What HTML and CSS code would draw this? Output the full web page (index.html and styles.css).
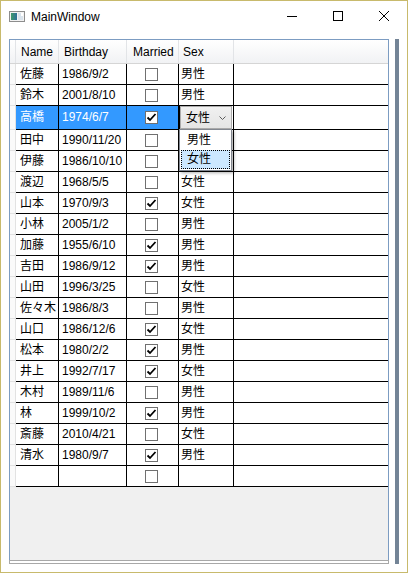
FILE: index.html
```html
<!DOCTYPE html>
<html>

<head>
    <meta charset="utf-8">
    <title>MainWindow</title>
    <link rel="stylesheet" href="styles.css">
</head>

<body>
    <div class="window">
        <div class="titleBar">
            <svg class="appIcon" width="16" height="11" viewBox="0 0 16 11">
                <defs>
                    <linearGradient id="iconFill" x1="0" y1="0" x2="1" y2="0">
                        <stop offset="0" stop-color="#3f9a6a" />
                        <stop offset="1" stop-color="#2f6f9a" />
                    </linearGradient>
                </defs>
                <rect x="0.5" y="0.5" width="15" height="10" fill="#f2f2f2" stroke="#8d8d8d" />
                <rect x="2" y="2" width="6" height="7" fill="url(#iconFill)" />
                <rect x="9" y="2" width="5" height="7" fill="#d9e3ec" />
                <rect x="12" y="2" width="2" height="3" fill="#ffffff" />
            </svg>
            <span class="title">MainWindow</span>
            <div class="captionButtons">
                <div class="capBtn">
                    <svg width="10" height="10" viewBox="0 0 10 10">
                        <line x1="0" y1="5.5" x2="10" y2="5.5" stroke="#000" stroke-width="1" />
                    </svg>
                </div>
                <div class="capBtn">
                    <svg width="10" height="10" viewBox="0 0 10 10">
                        <rect x="0.5" y="0.5" width="9" height="9" fill="none" stroke="#000" stroke-width="1" />
                    </svg>
                </div>
                <div class="capBtn">
                    <svg width="10" height="10" viewBox="0 0 10 10">
                        <path d="M0 0 L10 10 M10 0 L0 10" stroke="#000" stroke-width="1" />
                    </svg>
                </div>
            </div>
        </div>

        <div class="client">
            <div class="gridWrap">
                <div class="dataGrid">
                    <div class="gridHeader">
                        <div class="hcell rowHeadCol"></div>
                        <div class="hcell">Name</div>
                        <div class="hcell">Birthday</div>
                        <div class="hcell married">Married</div>
                        <div class="hcell sexHead">Sex</div>
                        <div class="hcell fill"></div>
                    </div>

                    <div class="gridBody">
                        <div class="row">
                            <div class="rowHead"></div>
                            <div class="cell name">佐藤</div>
                            <div class="cell birthday">1986/9/2</div>
                            <div class="cell married"><span class="check"></span></div>
                            <div class="cell sex">男性</div>
                            <div class="cell fill"></div>
                        </div>
                        <div class="row">
                            <div class="rowHead"></div>
                            <div class="cell name">鈴木</div>
                            <div class="cell birthday">2001/8/10</div>
                            <div class="cell married"><span class="check"></span></div>
                            <div class="cell sex">男性</div>
                            <div class="cell fill"></div>
                        </div>
                        <div class="row selected">
                            <div class="rowHead"></div>
                            <div class="cell name">高橋</div>
                            <div class="cell birthday">1974/6/7</div>
                            <div class="cell married"><span class="check"><svg width="11" height="11" viewBox="0 0 11 11"><path d="M1.5 5.5 L4 8 L9.5 2" fill="none" stroke="#000" stroke-width="1.8" /></svg></span></div>
                            <div class="cell sex editing">
                                <div class="combo">
                                    <span>女性</span>
                                    <svg class="chevron" width="7" height="4" viewBox="0 0 7 4">
                                        <polyline points="0.5,0.5 3.5,3.5 6.5,0.5" fill="none" stroke="#5c5c5c" stroke-width="1" />
                                    </svg>
                                </div>
                            </div>
                            <div class="cell fill"></div>
                        </div>
                        <!-- sex of the next two rows sits under the open list -->
                        <div class="row">
                            <div class="rowHead"></div>
                            <div class="cell name">田中</div>
                            <div class="cell birthday">1990/11/20</div>
                            <div class="cell married"><span class="check"></span></div>
                            <div class="cell sex"></div>
                            <div class="cell fill"></div>
                        </div>
                        <div class="row">
                            <div class="rowHead"></div>
                            <div class="cell name">伊藤</div>
                            <div class="cell birthday">1986/10/10</div>
                            <div class="cell married"><span class="check"></span></div>
                            <div class="cell sex"></div>
                            <div class="cell fill"></div>
                        </div>
                        <div class="row">
                            <div class="rowHead"></div>
                            <div class="cell name">渡辺</div>
                            <div class="cell birthday">1968/5/5</div>
                            <div class="cell married"><span class="check"></span></div>
                            <div class="cell sex">女性</div>
                            <div class="cell fill"></div>
                        </div>
                        <div class="row">
                            <div class="rowHead"></div>
                            <div class="cell name">山本</div>
                            <div class="cell birthday">1970/9/3</div>
                            <div class="cell married"><span class="check"><svg width="11" height="11" viewBox="0 0 11 11"><path d="M1.5 5.5 L4 8 L9.5 2" fill="none" stroke="#000" stroke-width="1.8" /></svg></span></div>
                            <div class="cell sex">女性</div>
                            <div class="cell fill"></div>
                        </div>
                        <div class="row">
                            <div class="rowHead"></div>
                            <div class="cell name">小林</div>
                            <div class="cell birthday">2005/1/2</div>
                            <div class="cell married"><span class="check"></span></div>
                            <div class="cell sex">男性</div>
                            <div class="cell fill"></div>
                        </div>
                        <div class="row">
                            <div class="rowHead"></div>
                            <div class="cell name">加藤</div>
                            <div class="cell birthday">1955/6/10</div>
                            <div class="cell married"><span class="check"><svg width="11" height="11" viewBox="0 0 11 11"><path d="M1.5 5.5 L4 8 L9.5 2" fill="none" stroke="#000" stroke-width="1.8" /></svg></span></div>
                            <div class="cell sex">男性</div>
                            <div class="cell fill"></div>
                        </div>
                        <div class="row">
                            <div class="rowHead"></div>
                            <div class="cell name">吉田</div>
                            <div class="cell birthday">1986/9/12</div>
                            <div class="cell married"><span class="check"><svg width="11" height="11" viewBox="0 0 11 11"><path d="M1.5 5.5 L4 8 L9.5 2" fill="none" stroke="#000" stroke-width="1.8" /></svg></span></div>
                            <div class="cell sex">男性</div>
                            <div class="cell fill"></div>
                        </div>
                        <div class="row">
                            <div class="rowHead"></div>
                            <div class="cell name">山田</div>
                            <div class="cell birthday">1996/3/25</div>
                            <div class="cell married"><span class="check"></span></div>
                            <div class="cell sex">女性</div>
                            <div class="cell fill"></div>
                        </div>
                        <div class="row">
                            <div class="rowHead"></div>
                            <div class="cell name">佐々木</div>
                            <div class="cell birthday">1986/8/3</div>
                            <div class="cell married"><span class="check"></span></div>
                            <div class="cell sex">男性</div>
                            <div class="cell fill"></div>
                        </div>
                        <div class="row">
                            <div class="rowHead"></div>
                            <div class="cell name">山口</div>
                            <div class="cell birthday">1986/12/6</div>
                            <div class="cell married"><span class="check"><svg width="11" height="11" viewBox="0 0 11 11"><path d="M1.5 5.5 L4 8 L9.5 2" fill="none" stroke="#000" stroke-width="1.8" /></svg></span></div>
                            <div class="cell sex">女性</div>
                            <div class="cell fill"></div>
                        </div>
                        <div class="row">
                            <div class="rowHead"></div>
                            <div class="cell name">松本</div>
                            <div class="cell birthday">1980/2/2</div>
                            <div class="cell married"><span class="check"><svg width="11" height="11" viewBox="0 0 11 11"><path d="M1.5 5.5 L4 8 L9.5 2" fill="none" stroke="#000" stroke-width="1.8" /></svg></span></div>
                            <div class="cell sex">男性</div>
                            <div class="cell fill"></div>
                        </div>
                        <div class="row">
                            <div class="rowHead"></div>
                            <div class="cell name">井上</div>
                            <div class="cell birthday">1992/7/17</div>
                            <div class="cell married"><span class="check"><svg width="11" height="11" viewBox="0 0 11 11"><path d="M1.5 5.5 L4 8 L9.5 2" fill="none" stroke="#000" stroke-width="1.8" /></svg></span></div>
                            <div class="cell sex">女性</div>
                            <div class="cell fill"></div>
                        </div>
                        <div class="row">
                            <div class="rowHead"></div>
                            <div class="cell name">木村</div>
                            <div class="cell birthday">1989/11/6</div>
                            <div class="cell married"><span class="check"></span></div>
                            <div class="cell sex">男性</div>
                            <div class="cell fill"></div>
                        </div>
                        <div class="row">
                            <div class="rowHead"></div>
                            <div class="cell name">林</div>
                            <div class="cell birthday">1999/10/2</div>
                            <div class="cell married"><span class="check"><svg width="11" height="11" viewBox="0 0 11 11"><path d="M1.5 5.5 L4 8 L9.5 2" fill="none" stroke="#000" stroke-width="1.8" /></svg></span></div>
                            <div class="cell sex">男性</div>
                            <div class="cell fill"></div>
                        </div>
                        <div class="row">
                            <div class="rowHead"></div>
                            <div class="cell name">斎藤</div>
                            <div class="cell birthday">2010/4/21</div>
                            <div class="cell married"><span class="check"></span></div>
                            <div class="cell sex">女性</div>
                            <div class="cell fill"></div>
                        </div>
                        <div class="row">
                            <div class="rowHead"></div>
                            <div class="cell name">清水</div>
                            <div class="cell birthday">1980/9/7</div>
                            <div class="cell married"><span class="check"><svg width="11" height="11" viewBox="0 0 11 11"><path d="M1.5 5.5 L4 8 L9.5 2" fill="none" stroke="#000" stroke-width="1.8" /></svg></span></div>
                            <div class="cell sex">男性</div>
                            <div class="cell fill"></div>
                        </div>
                        <!-- new item row -->
                        <div class="row">
                            <div class="rowHead"></div>
                            <div class="cell name"></div>
                            <div class="cell birthday"></div>
                            <div class="cell married"><span class="check"></span></div>
                            <div class="cell sex"></div>
                            <div class="cell fill"></div>
                        </div>
                    </div>

                    <!-- open combobox list -->
                    <div class="popup">
                        <div class="popItem">男性</div>
                        <div class="popItem current">女性</div>
                    </div>
                </div>
                <div class="hScroll"></div>
            </div>
            <div class="vBar"></div>
        </div>
    </div>
</body>

</html>
```

FILE: styles.css
```css
* {
    box-sizing: border-box;
}

body {
    margin: 0;
    padding: 0;
    font-family: "Liberation Sans", "Noto Sans CJK JP", sans-serif;
    font-size: 12px;
    color: #000;
}

.window {
    width: 408px;
    height: 573px;
    border: 1px solid #c8ba6c;
    background-color: #fff;
    display: flex;
    flex-direction: column;
}

.titleBar {
    height: 30px;
    flex: none;
    display: flex;
    align-items: center;
}

.appIcon {
    margin-left: 8px;
    flex: none;
}

.title {
    margin-left: 6px;
    padding-top: 1px;
}

.captionButtons {
    margin-left: auto;
    display: flex;
    height: 100%;
}

.capBtn {
    width: 46px;
    display: flex;
    justify-content: center;
    align-items: center;
}

.client {
    flex: 1;
    display: flex;
    padding: 8px;
}

.gridWrap {
    width: 380px;
    display: flex;
    flex-direction: column;
}

.dataGrid {
    flex: 1;
    position: relative;
    border: 1px solid #7c9cc2;
    border-bottom: none;
    background-color: #f0f0f0;
}

.hScroll {
    height: 4px;
    flex: none;
    border: 1px solid #a8a8a8;
    background-color: #fff;
}

.vBar {
    width: 4px;
    margin-left: 6px;
    background-color: #738496;
}

.gridHeader,
.row {
    display: grid;
    grid-template-columns: 6px 43px 68px 52px 55px 1fr;
}

.gridHeader {
    height: 24px;
    background: linear-gradient(#ffffff, #f1f2f4);
    border-bottom: 1px solid #d5d5d5;
}

.hcell {
    border-right: 1px solid #e2e4e7;
    padding-left: 5px;
    padding-top: 1px;
    line-height: 22px;
    white-space: nowrap;
}

.hcell.married {
    padding-left: 6px;
}

.hcell.sexHead {
    padding-left: 4px;
}

.hcell.rowHeadCol {
    padding: 0;
}

.hcell.fill {
    border-right: none;
}

.row {
    height: 21px;
    background-color: #fff;
}

.row.selected {
    height: 24px;
}

.rowHead {
    background-color: #fafafa;
    border-right: 1px solid #e2e2e2;
    border-bottom: 1px solid #e2e2e2;
}

.cell {
    border-right: 1px solid #000;
    border-bottom: 1px solid #000;
    line-height: 20px;
    white-space: nowrap;
    overflow: hidden;
}

.row.selected .cell {
    line-height: 23px;
}

.cell.name {
    padding-left: 4px;
}

.cell.birthday {
    padding-left: 3px;
}

.cell.sex {
    padding-left: 2px;
}

.cell.fill {
    border-right: none;
}

.cell.married {
    display: flex;
    align-items: center;
    padding-left: 18px;
}

.check {
    width: 13px;
    height: 13px;
    border: 1px solid #707070;
    background-color: #fff;
    display: flex;
    justify-content: center;
    align-items: center;
}

.row.selected .name,
.row.selected .birthday,
.row.selected .married {
    background-color: #3399ff;
    color: #fff;
}

.cell.sex.editing {
    padding-left: 1px;
    box-shadow: inset 1px 0 0 #000;
}

.combo {
    height: 23px;
    width: 52px;
    border: 1px solid #acacac;
    background: linear-gradient(#f0f0f0, #e5e5e5);
    display: flex;
    align-items: center;
    padding-left: 5px;
    line-height: 20px;
}

.chevron {
    margin-left: auto;
    margin-right: 5px;
}

.popup {
    position: absolute;
    left: 169px;
    top: 89px;
    width: 53px;
    height: 42px;
    border: 1px solid #828790;
    background-color: #fff;
    box-shadow: 2px 2px 3px rgba(0, 0, 0, 0.3);
}

.popItem {
    height: 20px;
    line-height: 20px;
    padding-left: 7px;
}

.popItem.current {
    height: 19px;
    line-height: 17px;
    margin: 0 1px;
    padding-left: 5px;
    background-color: #cce8ff;
    border: 1px dotted #000;
}
```
